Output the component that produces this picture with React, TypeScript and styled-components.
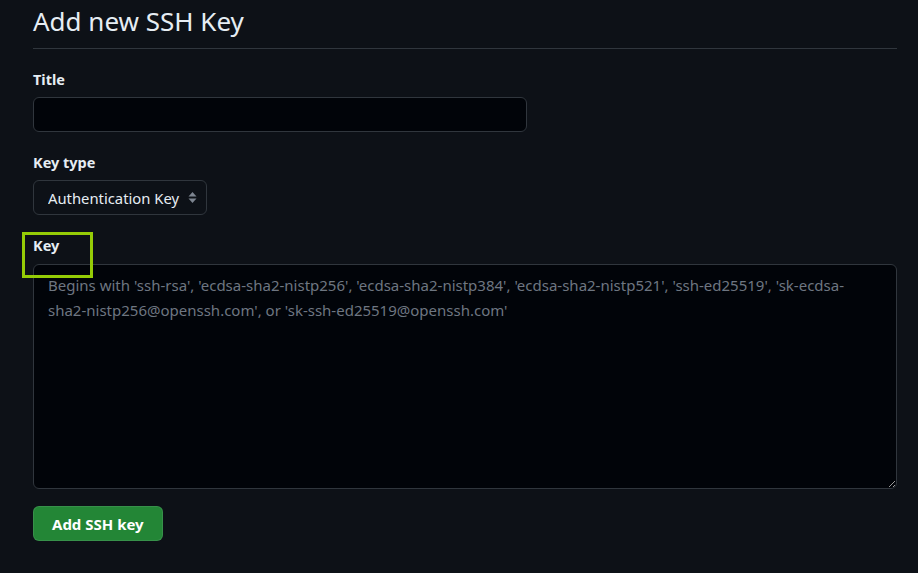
import styled, { createGlobalStyle } from 'styled-components';

const GlobalStyle = createGlobalStyle`
  html, body {
    margin: 0;
    padding: 0;
    background: #0d1117;
    color: #e6edf3;
    font-family: "Noto Sans", "Open Sans", sans-serif;
  }
  * {
    box-sizing: border-box;
  }
`;

function App() {
  return (
    <>
      <GlobalStyle />
      <Page>
        <Heading>Add new SSH Key</Heading>
        <Form>
          <Field>
            <Label htmlFor="ssh-title">Title</Label>
            <TextInput id="ssh-title" type="text" />
          </Field>
          <Field>
            <Label htmlFor="ssh-type">Key type</Label>
            <SelectWrap>
              <Select id="ssh-type" defaultValue="authentication">
                <option value="authentication">Authentication Key</option>
                <option value="signing">Signing Key</option>
              </Select>
              <SelectArrows width="9" height="13" viewBox="0 0 9 13" aria-hidden="true">
                <path d="M4.5 1 L8.5 5.5 H0.5 Z" />
                <path d="M4.5 12 L8.5 7.5 H0.5 Z" />
              </SelectArrows>
            </SelectWrap>
          </Field>
          <Field>
            <KeyLabelWrap>
              <Label htmlFor="ssh-key" $gap={6}>Key</Label>
              <Highlight />
            </KeyLabelWrap>
            <KeyArea
              id="ssh-key"
              placeholder="Begins with 'ssh-rsa', 'ecdsa-sha2-nistp256', 'ecdsa-sha2-nistp384', 'ecdsa-sha2-nistp521', 'ssh-ed25519', 'sk-ecdsa-sha2-nistp256@openssh.com', or 'sk-ssh-ed25519@openssh.com'"
            />
          </Field>
          <SubmitButton type="button">Add SSH key</SubmitButton>
        </Form>
      </Page>
    </>
  );
}
export default App;

const Page = styled.div`
  width: 918px;
  height: 573px;
  padding: 0 21px 0 33px;
  overflow: hidden;
`;

const Heading = styled.h2`
  margin: 0;
  padding: 3px 0 9px;
  font-size: 26px;
  font-weight: 400;
  line-height: 36px;
  border-bottom: 1px solid #30363d;
`;

const Form = styled.form`
  display: flex;
  flex-direction: column;
  align-items: flex-start;
  padding-top: 17px;
`;

const Field = styled.div`
  display: flex;
  flex-direction: column;
  align-items: flex-start;
  width: 100%;
  margin-bottom: 17px;
`;

const Label = styled.label<{ $gap?: number }>`
  display: block;
  font-size: 14.5px;
  font-weight: 700;
  line-height: 26px;
  margin-bottom: ${({ $gap }) => $gap ?? 5}px;
`;

const TextInput = styled.input`
  width: 494px;
  height: 35px;
  padding: 5px 12px;
  background: #010409;
  border: 1px solid #30363d;
  border-radius: 6px;
  color: #e6edf3;
  font-family: inherit;
  font-size: 15px;
  outline: none;
`;

const SelectWrap = styled.div`
  position: relative;
  display: inline-block;
`;

const Select = styled.select`
  appearance: none;
  width: 174px;
  height: 35px;
  padding: 0 26px 0 14px;
  background: #0d1117;
  border: 1px solid #30363d;
  border-radius: 6px;
  color: #e6edf3;
  font-family: inherit;
  font-size: 14.8px;
  outline: none;
`;

const SelectArrows = styled.svg`
  position: absolute;
  right: 10px;
  top: 11px;
  fill: #7d8590;
  pointer-events: none;
`;

const KeyLabelWrap = styled.div`
  position: relative;
`;

const Highlight = styled.div`
  position: absolute;
  left: -11px;
  top: 0;
  width: 71px;
  height: 46px;
  border: 3px solid #95cc06;
  pointer-events: none;
`;

const KeyArea = styled.textarea`
  width: 864px;
  height: 225px;
  padding: 8px 14px;
  background: #010409;
  border: 1px solid #30363d;
  border-radius: 6px;
  color: #e6edf3;
  font-family: inherit;
  font-size: 15px;
  line-height: 25px;
  resize: vertical;
  outline: none;

  &::placeholder {
    color: #6e7681;
  }
`;

const SubmitButton = styled.button`
  height: 35px;
  padding: 0 18px;
  background: #238636;
  border: 1px solid rgba(240, 246, 252, 0.1);
  border-radius: 6px;
  color: #ffffff;
  font-family: inherit;
  font-size: 15px;
  font-weight: 700;
  cursor: pointer;
`;
